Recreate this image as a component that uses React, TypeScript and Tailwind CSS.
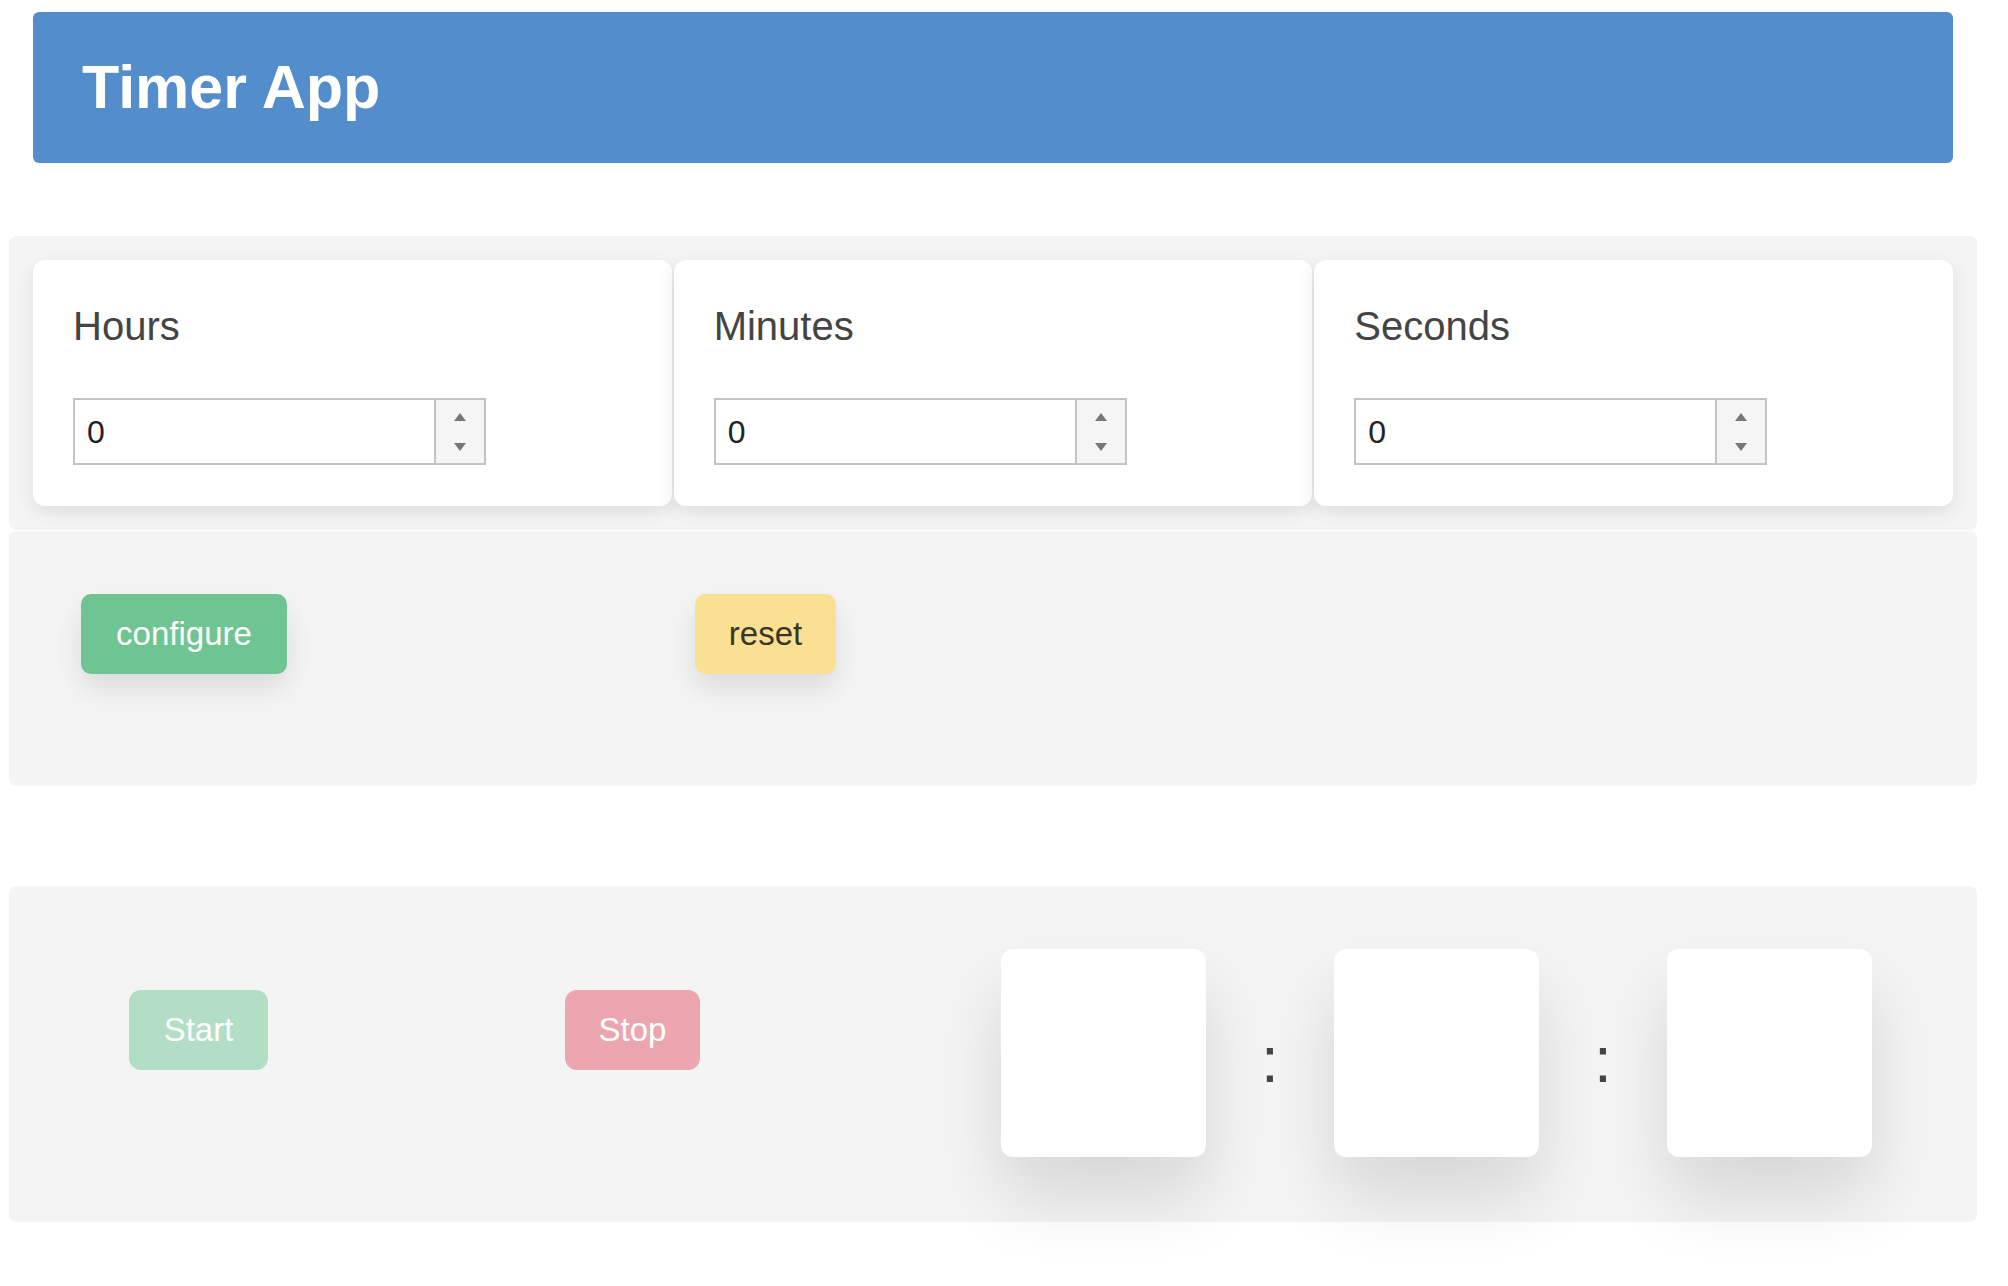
import { useState } from "react";

function Spinner() {
  return (
    <div className="flex w-[50px] flex-col items-center justify-center gap-[22px] border-l-2 border-[#c4c4c4] bg-[#f5f5f5]">
      <svg width="12" height="8" viewBox="0 0 12 8">
        <path d="M6 0 L12 8 L0 8 Z" fill="#777" />
      </svg>
      <svg width="12" height="8" viewBox="0 0 12 8">
        <path d="M0 0 L12 0 L6 8 Z" fill="#777" />
      </svg>
    </div>
  );
}

function UnitCard({ label, value, onChange }: { label: string; value: string; onChange: (v: string) => void }) {
  return (
    <div className="h-[246px] rounded-[12px] bg-white px-[40px] pt-[46px] shadow-[0_6px_18px_rgba(0,0,0,0.09)]">
      <div className="text-[40px] leading-none text-[#444]">{label}</div>
      <div className="mt-[52px] flex h-[67px] w-[413px] border-2 border-[#c4c4c4] bg-white">
        <input
          value={value}
          onChange={(e) => onChange(e.target.value)}
          className="min-w-0 flex-1 bg-transparent pl-[12px] text-[32px] text-[#222] outline-none"
        />
        <Spinner />
      </div>
    </div>
  );
}

function TimeBox() {
  return <div className="h-[208px] w-[205px] rounded-[12px] bg-white shadow-[0_40px_70px_rgba(0,0,0,0.12)]" />;
}

function Colon() {
  return (
    <div className="w-[128px] pt-[79px] text-center text-[64px] leading-none text-[#444]">:</div>
  );
}

export default function App() {
  const [h, setH] = useState("0");
  const [m, setM] = useState("0");
  const [s, setS] = useState("0");

  return (
    <div className="min-h-[1286px] bg-white font-['Liberation_Sans',Arial,sans-serif]">
      <div className="ml-[9px] w-[1968px] pt-[12px]">
        {/* header */}
        <div className="mx-[24px] flex h-[151px] items-center rounded-[6px] bg-[#538dcb] pl-[49px]">
          <h1 className="text-[61px] font-bold leading-none text-white">Timer App</h1>
        </div>

        {/* configure inputs */}
        <div className="mt-[73px] grid grid-cols-3 gap-[2px] rounded-[8px] bg-[#f4f4f4] p-[24px]">
          <UnitCard label="Hours" value={h} onChange={setH} />
          <UnitCard label="Minutes" value={m} onChange={setM} />
          <UnitCard label="Seconds" value={s} onChange={setS} />
        </div>

        <div className="mt-[1px] flex h-[255px] items-start rounded-[8px] bg-[#f4f4f4] pl-[72px] pt-[63px]">
          <button className="flex h-[80px] w-[206px] items-center justify-center rounded-[10px] bg-[#6fc591] text-[33px] text-white shadow-[0_14px_28px_rgba(0,0,0,0.1)]">
            configure
          </button>
          <button
            onClick={() => {
              setH("0");
              setM("0");
              setS("0");
            }}
            className="ml-[408px] flex h-[80px] w-[141px] items-center justify-center rounded-[10px] bg-[#fae093] text-[33px] text-[#3a3626] shadow-[0_14px_28px_rgba(0,0,0,0.1)]"
          >
            reset
          </button>
        </div>

        {/* run */}
        <div className="mt-[100px] flex h-[336px] items-start rounded-[8px] bg-[#f4f4f4] pl-[120px] pt-[63px]">
          <button className="mt-[41px] flex h-[80px] w-[139px] items-center justify-center rounded-[12px] bg-[#b3dec6] text-[33px] text-white">
            Start
          </button>
          <button className="ml-[297px] mt-[41px] flex h-[80px] w-[135px] items-center justify-center rounded-[12px] bg-[#eba6b0] text-[33px] text-white">
            Stop
          </button>
          <div className="ml-[301px] flex items-start">
            <TimeBox />
            <Colon />
            <TimeBox />
            <Colon />
            <TimeBox />
          </div>
        </div>
      </div>
    </div>
  );
}
